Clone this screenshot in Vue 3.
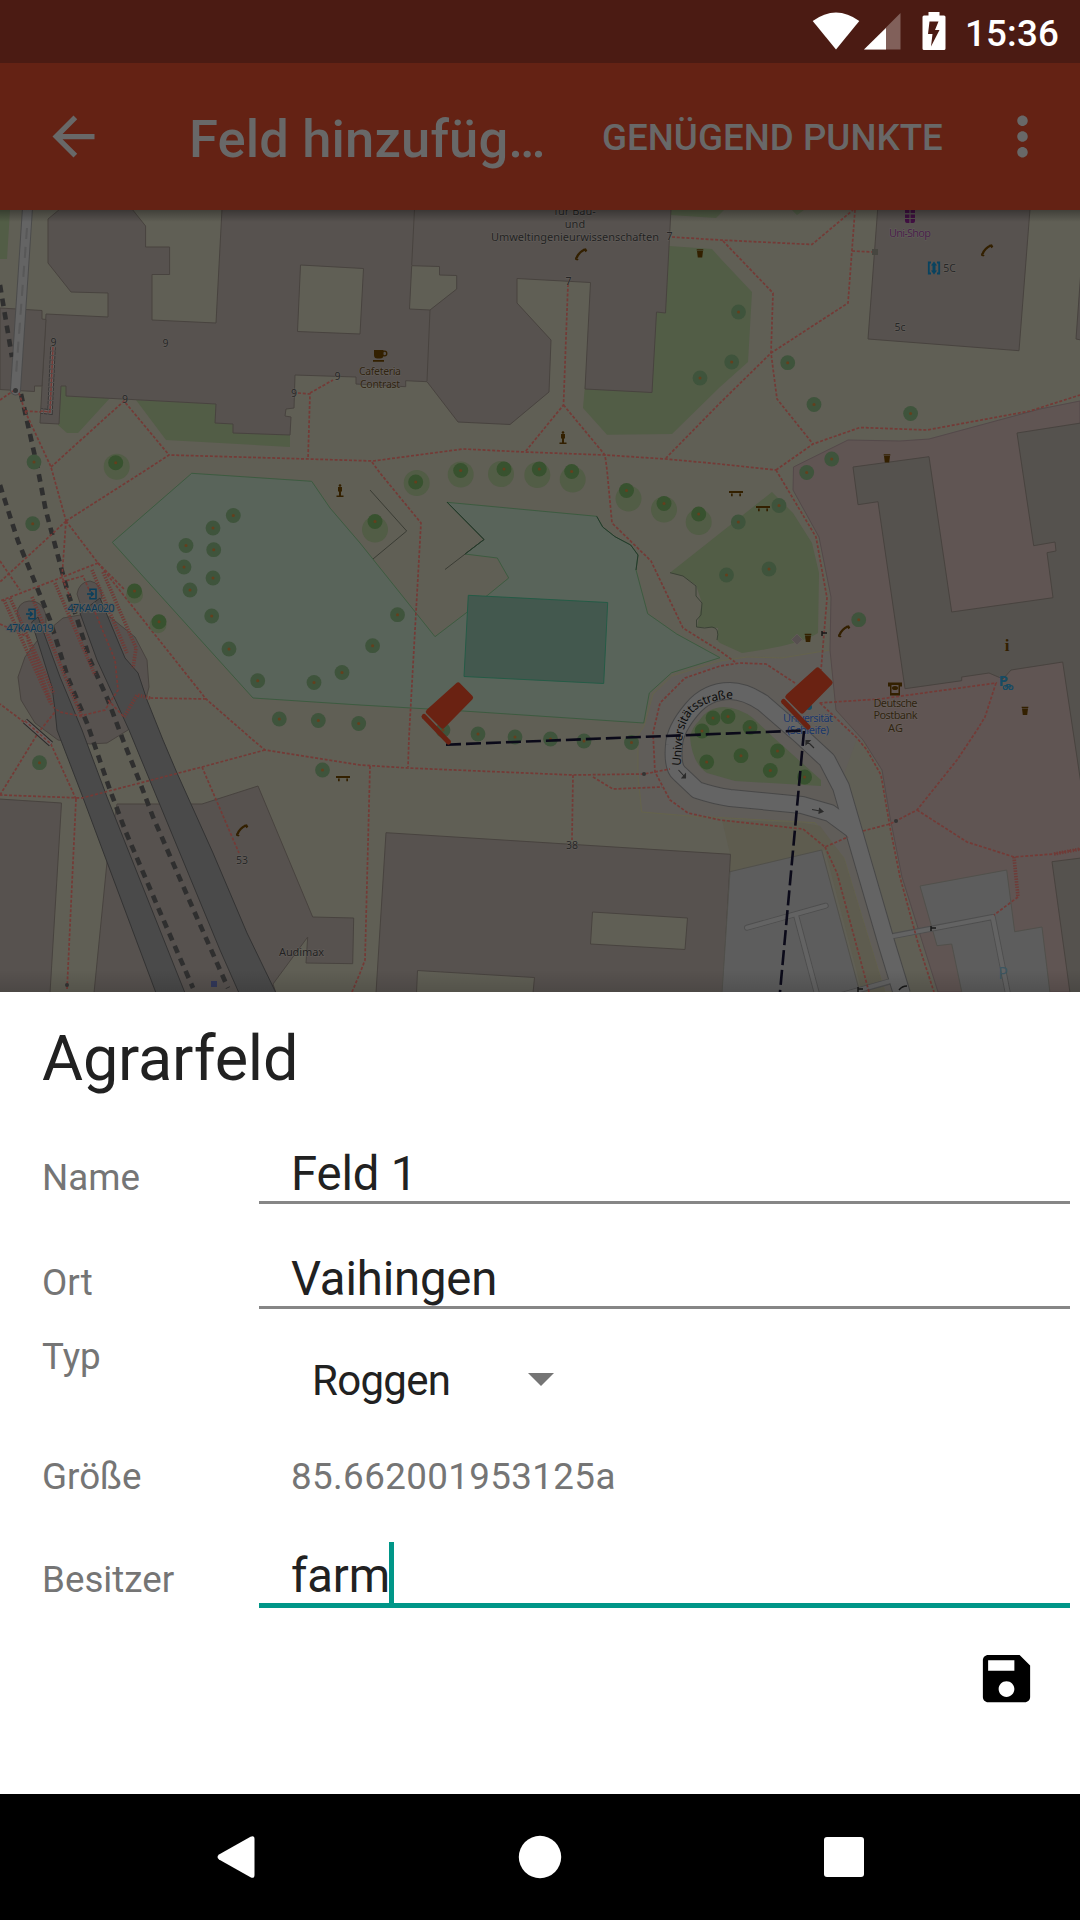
<script setup>
import { ref } from 'vue'

const name = ref('Feld 1')
const place = ref('Vaihingen')
const owner = ref('farm')

const plainTrees = [
  [34, 462], [700, 378], [738.5, 312], [731.7, 362], [787.7, 362.7], [814, 404.5], [910.6, 413.5], [831.7, 459], [806.7, 472.5],
  [32.7, 523.7], [233.3, 515.5], [213, 528], [186, 545.5], [213.7, 549.7], [184, 567], [213, 578], [190, 590], [211.7, 616],
  [229, 649], [257.7, 680.7], [314, 682.5], [342, 672.5], [279.3, 719], [318.3, 720.5], [358.7, 723.5],
  [397.5, 614.7], [372.6, 645.7], [443, 730], [478, 734], [515, 737], [550.5, 739], [584, 741], [631.5, 742.5],
  [779, 505.5], [738.3, 522], [726.5, 575], [769, 569], [858.7, 619.7], [39.5, 762.7], [322.5, 770],
]
const darkTrees = [
  [728, 716.5], [750, 727.5], [713, 718], [702, 731], [706.7, 762], [741, 755.7], [777.5, 751], [770.3, 770.4], [804.6, 777],
]
const haloTrees = [
  [115.7, 462.7, 1, 4], [134.5, 591, 0, 4], [159, 621.7, -1, 3],
  [460.7, 470.5, 0, 4], [504, 469, -3, 5], [539.3, 469, -2, 6], [571.7, 471.5, 1, 8],
  [415.7, 482, 1, 1], [375, 521.5, 0, 8], [626.5, 490.5, 2, 8], [664, 503.5, 0, 6], [698.7, 514, 0, 8],
]

const footpaths = [
  'M0 400L13 391', 'M19 393L25 411L51 467L66 521', 'M25 411L42 412', 'M51 467L124 401L169 455',
  'M66 521L146 470L169 455L308 459L373 461L463 449L525 452L605 455L666 459L720 464L776 470',
  'M298 393L310 394L308 459M310 393L333 380', 'M568 284L563.5 405L525 452M563.5 405L605 455L607 470L612 523L651 561L683 628L720 651L735 662',
  'M372 462L380 473L421 523L409 737L408 767', 'M672 237L720 240L812 244.5L853 210M855 210L848 303L771 353L720 403L666 458',
  'M723 241L773 293L771 353L777 399L813 444M852 251L872 252', 'M776 470L813 444L860 427.5L927 430L1030 411L1080 395',
  'M776 470L816 537L827 598L821 670', 'M820 703L857 738L867 750L881 775L890 827L900 877L918 943L934 992',
  'M795 683L766 664L740 663L720 666L685 678L660 703L653 733L655 772L670 800L688 813L720 820L803 829L825 847L848 837',
  'M825 847L837 873L869 992', 'M863 831L890 824L917 810L957 760L977 730L985 717L996 683L880 699L819 703',
  'M917 810L967 842L1014 857L1053 854L1080 849M1018 897L994 915',
  'M66 521L0 582M66 521L98 563L206 699L253 740L265 750L360 765L408 768L573 775L644 774L670 769',
  'M573 775L572 840', 'M593 777L613 789L662 787', 'M370 766L365 960L360 973L352 992',
  'M265 750L202 767L82 798L0 795M202 767L239 853', 'M76 799L67 990M76 799L50 742M24 722L0 704', 'M0 795L38 733L55 712',
  'M206 699L150 698', 'M98 563L55 580L0 601M66 521L62 577L70 597M0 561L20 590M62 582L83 576L90 592',
  'M95 612L115 660L118 690L105 710L80 716L60 712L53 707M108 700L124 717M0 624L28 637M98 563L125 590',
]
const stairways = [
  'M92 570L127 653', 'M103 572L136 648L133 668', 'M55 583L95 675', 'M4 600L50 702', 'M10 598L54 694', 'M32 597L82 717',
  'M28 640L52 705', 'M150 698L137 695L124 717', 'M1014 857L1018 897', 'M1054 854L1080 849',
]
</script>

<template>
  <div class="screen">
    <header class="status">
      <svg class="status-icons" width="140" height="63" viewBox="808 0 140 63">
        <path fill="#fff" d="M812.7 21Q836 4 859.3 21L836 49.5Z" />
        <path fill="#81605a" d="M900.5 13V49.5H864Z" />
        <path fill="#fff" d="M886 28V49.5H864Z" />
        <path fill="#fff" fill-rule="evenodd" d="M928.500 12h11v3.500h4.500q1.500 0 1.500 1.500V48.500q0 1.500-1.500 1.500H924q-1.500 0-1.500-1.500V17q0-1.500 1.500-1.500h4.500ZM929.500 21.500L928 34H932.500L931 46.500L939.500 30H935L938.500 21.500Z" />
      </svg>
      <span class="clock">15:36</span>
    </header>

    <nav class="appbar">
      <svg class="back" viewBox="0 0 24 24"><path fill="currentColor" d="M20 11H7.830l5.590-5.590L12 4l-8 8 8 8 1.410-1.410L7.830 13H20v-2z" /></svg>
      <h1 class="heading">Feld hinzufüg…</h1>
      <span class="action">GENÜGEND PUNKTE</span>
      <svg class="more" viewBox="0 0 24 24"><path fill="currentColor" d="M12 8c1.100 0 2-.9 2-2s-.9-2-2-2-2 .9-2 2 .9 2 2 2zm0 2c-1.100 0-2 .9-2 2s.9 2 2 2 2-.9 2-2-.9-2-2-2zm0 6c-1.100 0-2 .9-2 2s.9 2 2 2 2-.9 2-2-.9-2-2-2z" /></svg>
    </nav>

    <svg class="map" width="1080" height="782" viewBox="0 210 1080 782">
      <defs>
        <path id="street" d="M680.500 766L682.500 738Q684 723 693 712.500Q703 702 728 698.500L740 699" />
        <linearGradient id="top-shade" x1="0" y1="0" x2="0" y2="1"><stop offset="0" stop-color="#000" stop-opacity=".33" /><stop offset="1" stop-color="#000" stop-opacity="0" /></linearGradient>
        <linearGradient id="bottom-shade" x1="0" y1="0" x2="0" y2="1"><stop offset="0" stop-color="#000" stop-opacity="0" /><stop offset="1" stop-color="#000" stop-opacity=".13" /></linearGradient>
        <g id="phone" transform="scale(.9)"><path d="M-5 4.500Q-2.500 -2 4 -5" fill="none" stroke="#332000" stroke-width="2.600" /><path d="M-6.500 3.500l4 2.500-1.700 1.300-2.500-1.200zM2.500-5.500l3-1 1.500 3-2 1.500z" fill="#332000" /></g>
        <g id="bin" fill="#332000"><path d="M-3-2.500h6l-.8 6.500h-4.400zM-3.300-4.200h6.600v1.200h-6.600z" /></g>
        <g id="bench" fill="#332000"><path d="M-7-2.500H7V-.5H-7zM-5 0h1.700v2.800H-5zM3.300 0H5v2.800H3.300z" /></g>
        <g id="statue" fill="#332000"><circle cy="-5" r="1.300" /><path d="M-2-3.500h4V1H1v4h2.500v1.500h-7V5H-1V1h-1z" /></g>
        <g id="entry" fill="none" stroke="#093f5c" stroke-width="1.500"><path d="M-2-2.500V-4.800H4V4.800H-2V2.500M-5 0H1M-1-2.300L1.300 0L-1 2.300" /></g>
        <g id="marker" fill="#6a2212"><path d="M15.500-15.500Q17.300-17 19 -15.300L31.500-2.500Q33 -.8 31.300 1L3.500 29.300Q1.500 31 0 29.400L-15 14.500Q-16 13 -14 11Z" transform="translate(0 -30.500)" /><path d="M-17 -12.500L7.500 13" stroke="#6a2212" stroke-width="5" stroke-linecap="round" /></g>
      </defs>
      <rect y="210" width="1080" height="782" fill="#605f55" />

      <!-- lawns -->
      <g fill="#525d46">
        <path d="M0 210H10L7 259H0ZM59 385H66V396L110 398L78 433H67L58 425ZM136 400L216 404L290 435V447L166 440ZM671 210H724L716 218L671 215ZM792 210H804L797 215Z" />
        <path d="M669 246L712 249L720 258L752 292L748 362L720 387L672 434L607 434.700L583 408L585 385Z" />
        <path d="M670 572.700L772 492L793 513L812 543L819 573L818 633Q800 645 742 653L720 643L717 640L718 628L697 627L702 603L696 585L683 576Z" />
      </g>
      <path d="M670 572.700L683 576L696 586V596L702 603L701 615L696.500 620V627Q705 629 712 627Q720 628 717 640" fill="none" stroke="#3b4236" />

      <!-- street surroundings -->
      <path fill="#605d59" stroke="#666449" stroke-width=".8" d="M720 661L671.700 676L653 694L644 726L638 735V775L641.700 812L690 816L815 822.700L844 858L885 992H938L863 740L836 710L830 650L782 658L747 657Z" />
      <path fill="#5e5c4f" d="M820 826L844 858L885 992H862L825 850L730 872V854L722 820L803 823Z" />
      <path fill="#605f55" d="M857 738L882 770L890 817L938 992H907L860 840L842 780Z" />

      <!-- commercial area -->
      <path fill="#605553" stroke="#54494a" d="M1080 401L1040 409L929 439L900 441L848 440L793.500 467L793 490L819 537L831 597L830 650L836 710L863 740L882 770L890 817L902 877L938 992H1081Z" />

      <!-- buildings -->
      <g fill="#57524f" stroke="#48433f" stroke-width="1">
        <path fill-rule="evenodd" d="M60 209L48 219V263L71 292L108 293V317L46 314L40 423L59 424L61 386H66V396L216 404L215 423L233 424V433L290 435L291 417L285 416L286 409L294 408L295 375L356 377V384L405.700 386.700V380.700L427 381.700L458 422L510 424.500L549 392L551 340L517 303V278.500L590.500 282.500L585 389L652 392.500L656.500 312L665.500 313L671 209ZM132 209L145.600 226V247H169.600V274.500H152V320L216 323L222 209ZM300.500 265L363.500 268.500L360 334L297.500 331.500ZM411.700 265.700L439.500 266.500V275L456.700 275.500V289L430 310L409.500 309Z" />
        <path d="M0 308L42 310.500V319L46 319.500L42 386H34.500V391.500L0 389.500ZM877.700 209L868 339L1019 350.700L1030 209ZM1081 270L1076 339L1081 340Z" />
        <path fill="none" d="M414.500 209L411.700 265M430 310L427 381" />
        <path d="M-1 799L61.500 803L50 993H-1ZM94 993L107 862L117 804H202L258 786L312.700 917L353.700 918L352.700 963.700L306 963L307.700 937L273 984L276 993Z" />
        <path fill-rule="evenodd" d="M386 832.700L730.500 854.300L722.700 993H376ZM592.500 912L687.500 918L685 949.500L590.500 944ZM417.500 970.500L534.500 977.500L533 993H416.500Z" />
        <path d="M18 677L25 657L40 637L63 618L80 615L110 617L135 637L147 660L149 687L143 710L128 730L107 743L90 744L58 740L35 723L21 700Z" />
        <path d="M17 614Q18 602 29 601Q42 600 46 615V628H22ZM77 594Q79 582 90 581Q101 583 102 597L94 612H83Z" />
      </g>
      <g fill="#55524e" stroke="#48433f">
        <path d="M853 467L929 456.700L951.700 612L1053 597.700L1047 552.700L1056 551L1055 542L1033.700 545.700L1017 433L1081 423V784L1062.700 662L1011 670L1003 679L989 673L961.700 677V680.700L905 688.700L878 501.700L858 504.700Z" />
        <path d="M1052 861.700L1081 858V993H1070Z" />
      </g>

      <!-- car parks -->
      <g fill="#5d5d5d" stroke="#51504b">
        <path d="M730 871.700L821.700 850L860 993H722ZM920 886L1006.700 870L1014.700 931.700L1042 927L1050 993H962L951.700 944L937 945.700Z" />
      </g>

      <!-- sports grounds -->
      <path fill="#59645a" stroke="#3d5b40" d="M112.300 542.300L191.700 473.300L311.700 481.300L330 508L360 543L435 636.700L467.300 612L487 595.700L508.700 578L497.300 558L465 554L484 539.700L447 502.300L596.700 516.300L602.700 527L615 536.700L630.700 545L638 555L636 570L647.700 613.700L676.700 634L720 657.700L671.700 672.700L649.300 693L643.700 723L463 711L360 705L253 698Z" />
      <path fill="#43584e" stroke="#255b46" d="M468.300 595.300L607.700 602.500L603.700 683.500L464 676.500Z" />
      <path fill="none" stroke="#3a3c34" d="M370 490L406.700 531L373 559M447 502L484 539.500L445 569.500" />
      <path fill="none" stroke="#243a2b" d="M447 502L484 539.500L465 554M596.700 516.300L602.700 527L615 536.700L630.700 545L638 555L636 570" />

      <!-- platforms -->
      <g fill="#4a4a4a" stroke="#333" stroke-width="1">
        <path d="M31.700 622L38 617L60 677L82 730L107 797L177 973L185 993H156L107 862L82 795L57 730L55 710L52 687Z" />
        <path d="M80 613L100 598L125 658L138 673L147 700L163 740L177 773L213 853L247 933L276 993H239L220 950L160 805L129 730L97 660Z" />
      </g>

      <!-- streets -->
      <g fill="none" stroke-linejoin="round">
        <path d="M27.500 208L15.500 390" stroke="#4b4b4b" stroke-width="11" stroke-linecap="round" />
        <path d="M747 927.700L825.700 905.700M796 915L817 994M890 936.500L992.700 917L1008 994M838 996L892 981" stroke="#4e4e4e" stroke-width="6" stroke-linecap="round" />
        <path d="M902 994L887 945L855 835L841 787L827 760L800 735L763 703Q745 691 730 691Q707 691 692 709Q675 729 674 745Q672 767 679 773L697 790Q715 796 730 798L802 805L830 813L853 830" stroke="#484848" stroke-width="18" />
        <path d="M747 927.700L825.700 905.700M796 915L817 994M886 937.500L992.700 917L1008 994M838 996L894 980" stroke="#636363" stroke-width="4.200" stroke-linecap="round" />
        <path d="M902 994L887 945L855 835L841 787L827 760L800 735L763 703Q745 691 730 691Q707 691 692 709Q675 729 674 745Q672 767 679 773L697 790Q715 796 730 798L802 805L830 813L853 830" stroke="#646464" stroke-width="16" />
      </g>
      <path fill="#525d46" d="M690 737Q692 727 699 721Q708 707 724 707Q740 708 753 718L773 737L821 780V786L735 781L707 773Q692 763 690 737Z" />

      <!-- rails -->
      <g fill="none" stroke="#2f2f2f" stroke-width="4.600" stroke-dasharray="7.700 6">
        <path d="M0 285L12 357M21 394L38 470L45.700 510L61.700 570L68 593L78 621.700L90 660L108 700L123 740L139 780L153 817L187 895L228 988" />
        <path d="M0 485L7 507L18 541L34 580L50 620L68 678L87 723L110 790L125 830L160 912L193 988" />
      </g>
      <path d="M27.500 208L15.500 390" fill="none" stroke="#646464" stroke-width="9" stroke-linecap="round" />
      <path d="M27 228L16 375" stroke="#585858" stroke-width="2" stroke-dasharray="11 8" />

      <!-- footpaths -->
      <g fill="none" stroke="#743a36" stroke-width="1.700" stroke-dasharray="3 1.800">
        <path v-for="d in footpaths" :key="d" :d="d" />
      </g>
      <g fill="none" stroke="#6f3b37" stroke-width="3.600" stroke-dasharray="1.400 1.300">
        <path v-for="d in stairways" :key="d" :d="d" />
      </g>
      <path d="M53 347L50 412L41 411" fill="none" stroke="#363636" stroke-width="5.500" stroke-dasharray="3.500 1" />
      <path d="M53 347L50 412L41 411" fill="none" stroke="#6c6765" stroke-width="3.500" stroke-dasharray="3.500 1" />
      <path d="M53 347L50 412L41 411" fill="none" stroke="#743a36" stroke-width="1.600" stroke-dasharray="3.500 1" />
      <path d="M25 721L51 744" stroke="#292929" stroke-width="6" /><path d="M25 721L51 744" stroke="#68605e" stroke-width="4" /><path d="M25 721L51 744" stroke="#743a36" stroke-width="1.500" stroke-dasharray="3 2" />

      <!-- trees -->
      <g v-for="t in haloTrees" :key="'h' + t[0]">
        <circle :cx="t[0] + t[2]" :cy="t[1] + t[3]" :r="t[0] > 120 && t[0] < 200 ? 8.500 : 13" fill="#525d46" />
        <circle :cx="t[0]" :cy="t[1]" r="7.500" fill="#38522f" /><circle :cx="t[0]" :cy="t[1]" r="1.500" fill="#653f1d" />
      </g>
      <g v-for="t in plainTrees" :key="'p' + t[0]"><circle :cx="t[0]" :cy="t[1]" r="7.400" fill="#3f543c" /><circle :cx="t[0]" :cy="t[1]" r="1.500" fill="#653f1d" /></g>
      <g v-for="t in darkTrees" :key="'d' + t[0]"><circle :cx="t[0]" :cy="t[1]" r="7.400" fill="#38522f" /><circle :cx="t[0]" :cy="t[1]" r="1.500" fill="#653f1d" /></g>

      <!-- symbols -->
      <use href="#phone" x="581" y="254" /><use href="#phone" x="987" y="250" /><use href="#phone" x="844" y="631" /><use href="#phone" x="242" y="830" />
      <use href="#bin" x="700" y="253.500" /><use href="#bin" x="887" y="458.500" /><use href="#bin" x="808" y="638" /><use href="#bin" x="1025" y="711" />
      <use href="#bench" x="736" y="493.500" /><use href="#bench" x="763" y="508.500" /><use href="#bench" x="343" y="778.500" />
      <use href="#statue" x="563" y="437.500" /><use href="#statue" x="340" y="490.500" />
      <use href="#entry" x="31" y="614" /><use href="#entry" x="92" y="594" />
      <path fill="#332000" d="M374 350H383.500V355Q383.500 358.500 380 358.500H377.500Q374 358.500 374 355ZM373 360H384V361.800H373Z" /><circle cx="384.500" cy="353.500" r="2.300" fill="none" stroke="#332000" stroke-width="1.300" />
      <path fill="#411042" d="M905 209h4.400v4H905zm5.600 0h4.400v4h-4.400zM905 214.500h4.400v3.500H905zm5.600 0h4.400v3.500h-4.400zM905 219h4.400v4H907q-2 0-2-2zm5.600 0h4.400v2q0 2-2 2h-2.400z" />
      <path d="M931 262.500H928.800V273.500H931M937 262.500H939.200V273.500H937" fill="none" stroke="#084360" stroke-width="1.800" /><path fill="#084360" d="M934 261.500L937 265.500H935.500V270.500H937L934 274.500L931 270.500H932.500V265.500H931Z" />
      <path fill="#474640" d="M872 249H878V255H872Z" /><path fill="#575050" stroke="#67605b" stroke-width=".6" d="M797 634L802.500 639.500L797 645L791.500 639.500Z" />
      <path fill="#32385a" d="M211 981h6v6h-6z" />
      <g fill="#343434"><circle cx="15.500" cy="390.500" r="2.500" /><circle cx="67" cy="985" r="2" /><circle cx="644" cy="774" r="2" /><circle cx="896" cy="821" r="2" /></g>
      <g fill="none" stroke="#181818" stroke-width="1.500"><path d="M822 631v5M822 633h5M931 926v5M931 928h5M858 987v5M858 989h5M899 990q3-4 8-4" /></g>
      <g fill="#2b2b2b" stroke="#2b2b2b" stroke-width="1.100"><path d="M678.500 770L685 777M685.500 774V778H682ZM812 809.500L820 811M819.500 808.500L823 811.500L819 813.200ZM814 748L807 741M806 744.500V740.500H810Z" /></g>
      <g><path fill="#332000" d="M888 682.500h14v4h-2v9h-10v-9h-2z" /><path fill="#605553" d="M891.500 685h7v8h-7z" /><ellipse cx="895" cy="688" rx="3" ry="2" fill="#332000" /></g>
      <g fill="none" stroke="#164b63" stroke-width="1.200"><circle cx="1005.500" cy="687.500" r="2" /><circle cx="1011" cy="687.500" r="2" /><path d="M1005.500 687.500L1007 684.500H1010L1011 687.500M1007 684.500L1008.500 687.500" /></g>
      <circle cx="809" cy="707" r="3" fill="#164b63" />

      <!-- labels -->
      <g class="labels" text-anchor="middle">
        <text x="575" y="228">und</text><text x="575" y="241" textLength="168">Umweltingenieurwissenschaften</text>
        <text x="575" y="214.500">für Bau-</text>
        <g class="brown small"><text x="380" y="375" textLength="42">Cafeteria</text><text x="380" y="387.500" textLength="40">Contrast</text></g>
        <g class="numbers"><text x="53.500" y="346">9</text><text x="165.500" y="346.500">9</text><text x="125" y="403">9</text><text x="294" y="397">9</text><text x="337.500" y="380">9</text><text x="669.500" y="240">7</text><text x="568.500" y="284.500">7</text><text x="949.500" y="272">5C</text><text x="900" y="330.500">5c</text><text x="242" y="863.500">53</text><text x="572" y="849">38</text></g>
        <text x="910" y="237" fill="#48224a" textLength="42">Uni-Shop</text>
        <text x="301.500" y="956" textLength="45">Audimax</text>
        <g class="stops"><text x="30" y="632" textLength="47">47KAA019</text><text x="91" y="612" textLength="47">47KAA020</text></g>
        <g class="brown"><text x="895.500" y="707" textLength="44">Deutsche</text><text x="895.500" y="719" textLength="44">Postbank</text><text x="895.500" y="731.500">AG</text></g>
        <g fill="#1a376a"><text x="808" y="722" textLength="50">Universität</text><text x="808" y="734" textLength="42">(Schleife)</text></g>
        <text x="1003.500" y="685.500" class="parking" fill="#164b63">P</text><text x="1003" y="979" class="parking-light">P</text>
        <text x="1007" y="651" class="info">i</text>
      </g>
      <text class="street-name"><textPath href="#street" textLength="99" lengthAdjust="spacing">Universitätsstraße</textPath></text>

      <!-- field outline -->
      <path d="M446 744.700L804 730.500M804 731L780 992" fill="none" stroke="#0b0a19" stroke-width="2.600" stroke-dasharray="15 5" />
      <use href="#marker" x="441" y="729" /><use href="#marker" x="800.500" y="714" />

      <rect y="210" width="1080" height="12" fill="url(#top-shade)" />
      <rect y="970" width="1080" height="22" fill="url(#bottom-shade)" />
    </svg>

    <main class="sheet">
      <h2 class="title">Agrarfeld</h2>
      <div class="row first"><span class="label">Name</span><div class="field">{{ name }}</div></div>
      <div class="row second"><span class="label">Ort</span><div class="field">{{ place }}</div></div>
      <div class="row type">
        <span class="label">Typ</span>
        <div class="select">Roggen<i class="arrow"></i></div>
      </div>
      <div class="row size"><span class="label">Größe</span><span class="amount">85.662001953125a</span></div>
      <div class="row owner"><span class="label">Besitzer</span><div class="field active">{{ owner }}<i class="caret"></i></div></div>
      <svg class="save" viewBox="0 0 24 24"><path d="M17 3H5c-1.110 0-2 .9-2 2v14c0 1.100.89 2 2 2h14c1.100 0 2-.9 2-2V7l-4-4zm-5 16c-1.660 0-3-1.340-3-3s1.340-3 3-3 3 1.340 3 3-1.340 3-3 3zm3-10H5V5h10v4z" /></svg>
    </main>

    <footer class="navbar">
      <svg width="1080" height="126" viewBox="0 0 1080 126" fill="#fff">
        <path d="M219 60.500L250.500 42.700Q254.500 41 254.500 45V81Q254.500 85 250.500 83.300L219 65.500Q216 63 219 60.500Z" />
        <circle cx="540" cy="63" r="21.200" />
        <rect x="824" y="43" width="40" height="40" rx="3" />
      </svg>
    </footer>
  </div>
</template>

<style>
body {
  margin: 0;
}
</style>

<style scoped>
.screen {
  width: 1080px;
  height: 1920px;
  display: flex;
  flex-direction: column;
  overflow: hidden;
  background: #fff;
  font-family: Roboto, sans-serif;
}
.status {
  height: 63px;
  flex: none;
  display: flex;
  justify-content: flex-end;
  background: #4b1b13;
  color: #fff;
}
.clock {
  width: 94px;
  margin: 0 21px 0 17px;
  font-size: 36.75px;
  font-weight: 500;
  line-height: 67px;
  letter-spacing: 0.15px;
  white-space: nowrap;
}
.appbar {
  height: 147px;
  flex: none;
  display: flex;
  align-items: center;
  background: #642214;
  color: #686868;
}
.back {
  width: 63px;
  height: 63px;
  margin-left: 42px;
}
.heading {
  width: 413px;
  margin: 5px 0 0 84px;
  font-size: 52.5px;
  font-weight: 500;
  line-height: 62px;
  letter-spacing: 0.15px;
  white-space: nowrap;
}
.action {
  width: 389px;
  margin-top: 2px;
  font-size: 36.75px;
  font-weight: 500;
  line-height: 44px;
  white-space: nowrap;
}
.more {
  width: 63px;
  height: 63px;
}
.map {
  display: block;
  flex: none;
}
.labels {
  font-family: 'Noto Sans', sans-serif;
  font-size: 11px;
  fill: #222;
  paint-order: stroke;
  stroke: rgba(112, 108, 104, 0.5);
  stroke-width: 1px;
}
.small {
  font-size: 10.5px;
}
.numbers {
  font-size: 10.5px;
  fill: #262626;
}
.brown {
  fill: #302410;
}
.stops {
  fill: #0a3a5a;
  stroke: #5c5955;
  stroke-width: 2px;
}
.parking {
  font-size: 15px;
  font-weight: 700;
  stroke: none;
}
.parking-light {
  font-size: 16px;
  fill: #3d5661;
  stroke: none;
}
.info {
  font-family: 'Liberation Serif', serif;
  font-size: 17px;
  font-weight: 700;
  fill: #332000;
  stroke: none;
}
.street-name {
  font-family: 'Noto Sans', sans-serif;
  font-size: 12px;
  fill: #0c0c0c;
}
.sheet {
  height: 802px;
  flex: none;
  box-sizing: border-box;
  padding-top: 30px;
  display: flex;
  flex-direction: column;
  color: #212121;
}
.title {
  margin: 0 0 0 42px;
  font-size: 63px;
  font-weight: 400;
  line-height: 74px;
  letter-spacing: -0.2px;
}
.row {
  display: flex;
  align-items: baseline;
  padding-right: 10px;
}
.label,
.amount {
  font-size: 36.75px;
  line-height: 44px;
  color: #757575;
}
.label {
  width: 217px;
  margin-left: 42px;
}
.field {
  flex: 1;
  height: 55px;
  display: flex;
  padding-left: 32px;
  border-bottom: 3px solid #868686;
  font-size: 47.25px;
  line-height: 56px;
  letter-spacing: -0.15px;
}
.first {
  height: 58px;
  margin-top: 50px;
}
.second {
  height: 58px;
  margin-top: 47px;
}
.type {
  height: 72px;
  margin-top: 26px;
  align-items: flex-start;
}
.select {
  width: 242px;
  margin: 21px 0 0 53px;
  display: flex;
  align-items: center;
  justify-content: space-between;
  font-size: 42px;
  line-height: 50px;
  letter-spacing: -0.7px;
}
.arrow {
  border: 13px solid transparent;
  border-top-color: #757575;
  border-bottom: 0;
  margin-top: -3px;
}
.size {
  height: 44px;
  margin-top: 48px;
}
.amount {
  margin-left: 32px;
  letter-spacing: 0.37px;
}
.owner {
  height: 60px;
  margin-top: 49px;
}
.field.active {
  border-bottom: 5px solid #009688;
}
.caret {
  width: 5px;
  height: 61px;
  margin: -6px 0 0 -1px;
  background: #009688;
}
.save {
  width: 63px;
  height: 63px;
  flex: none;
  align-self: flex-end;
  margin: 39px 42px 0 0;
}
.navbar {
  height: 126px;
  flex: none;
  background: #000;
}
.navbar svg {
  display: block;
}
</style>
